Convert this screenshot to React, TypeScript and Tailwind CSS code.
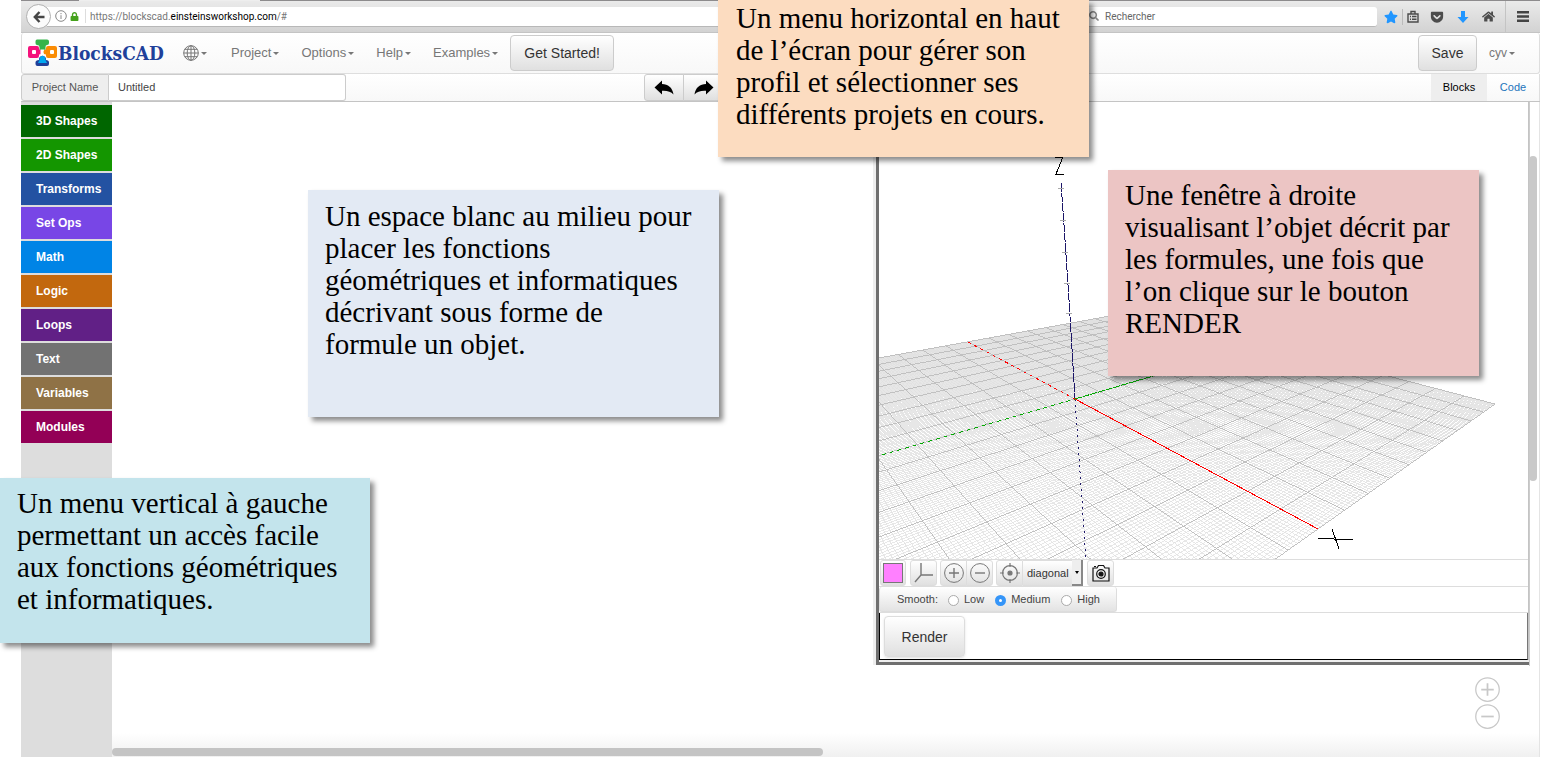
import React from "react";
import { FaStar, FaLock, FaHome, FaGetPocket, FaSearch } from "react-icons/fa";

const MENUS = ["Project", "Options", "Help", "Examples"];

const CATEGORIES = [
  { name: "3D Shapes", color: "bg-[#006600]" },
  { name: "2D Shapes", color: "bg-[#149600]" },
  { name: "Transforms", color: "bg-[#2352a2]" },
  { name: "Set Ops", color: "bg-[#7846e6]" },
  { name: "Math", color: "bg-[#0084e6]" },
  { name: "Logic", color: "bg-[#c2680e]" },
  { name: "Loops", color: "bg-[#612086]" },
  { name: "Text", color: "bg-[#727272]" },
  { name: "Variables", color: "bg-[#8f7246]" },
  { name: "Modules", color: "bg-[#930056]" },
];

// Perspective projection of the ground plane, with x and y running from -1 to 1.
function project(x: number, y: number): string {
  const w = 1 - 0.3886 * x + 0.359 * y;
  const px = (-269.2 * x + 645 * y + 1075) / w;
  const py = (-75.6 * x + 68.6 * y + 399) / w;
  return `${px.toFixed(1)} ${py.toFixed(1)}`;
}

function gridPath(count: number): string {
  const parts: string[] = [];
  for (let i = -count; i <= count; i++) {
    const t = i / count;
    parts.push(`M${project(t, -1)}L${project(t, 1)}`);
    parts.push(`M${project(-1, t)}L${project(1, t)}`);
  }
  return parts.join("");
}

const MINOR_GRID = gridPath(100);
const MAJOR_GRID = gridPath(10);

function Caret() {
  return <span className="border-x-[3px] border-t-[3px] border-x-transparent border-t-[#777]" />;
}

function Logo() {
  return (
    <svg viewBox="0 0 30 28" className="h-7 w-[30px]" aria-hidden="true">
      <path d="M9 0.500H19Q21 0.500 21 2.500V4Q21 6 19 6Q17.500 6 17.500 8V11Q17.500 13.500 14.500 13.500Q11.500 13.500 11.500 11V8Q11.500 6 9 6Q7.500 6 7.500 4V2.500Q7.500 0.500 9 0.500Z" fill="#35b44a" />
      <path d="M11 19Q14.500 14.500 18 19V21Q21 21 21 23.500V25Q21 27 19 27H9.500Q7.500 27 7.500 25V23.500Q7.500 21 11 21Z" fill="#20409a" />
      <path d="M11.500 19Q14.500 14.500 17.500 19V21L19 24H10L11.500 21Z" fill="#00a8f0" />
      <path d="M2 7H9Q11 7 11 9V10.500Q14 10.500 14 13Q14 15.500 11 15.500V17Q11 19 9 19H2Q0 19 0 17V9Q0 7 2 7Z" fill="#f4127c" />
      <path d="M12.500 10.500H16.500V16H12.500Z" fill="#fff" />
      <path d="M20 7H27Q29 7 29 9V17Q29 19 27 19H20Q18 19 18 17V15.500Q15.500 15.500 15.500 13Q15.500 10.500 18 10.500V9Q18 7 20 7Z" fill="#fa8c05" />
      <rect x="4" y="11" width="4" height="4" rx="1" fill="#fff" />
      <rect x="22" y="11" width="4" height="4" rx="1" fill="#fff" />
    </svg>
  );
}

function Globe() {
  return (
    <svg viewBox="0 0 16 16" className="size-4" fill="none" stroke="#777" aria-hidden="true">
      <circle cx="8" cy="8" r="7.300" />
      <ellipse cx="8" cy="8" rx="3.800" ry="7.300" />
      <path d="M8 .7V15.300M.7 8H15.300M1.800 4.300H14.200M1.800 11.700H14.200" />
    </svg>
  );
}

function CurvedArrow({ flip }: { flip?: boolean }) {
  return (
    <svg viewBox="0 0 20 15" className={flip ? "h-[15px] w-5 -scale-x-100" : "h-[15px] w-5"} aria-hidden="true">
      <path d="M.5 7.500L8 .5V4C14 4 18.500 7.500 19.500 14.500C17 11.500 13 10.500 8 10.800V14.500Z" />
    </svg>
  );
}

function CircleSign({ plus }: { plus?: boolean }) {
  return (
    <svg viewBox="0 0 20 20" className="size-5" fill="none" stroke="currentColor" aria-hidden="true">
      <circle cx="10" cy="10" r="9.400" />
      <path d={plus ? "M5 10H15M10 5V15" : "M5 10H15"} strokeWidth="1.400" />
    </svg>
  );
}

function BrowserBar() {
  return (
    <div className="flex h-[33px] flex-col bg-linear-to-b from-[#ebebeb] to-[#d2d2d2] text-[#4c4c4c]">
      <div className="flex h-px bg-[#8d8b8d]">
        <span className="ml-[58px] w-[181px] bg-[#eee]" />
      </div>
      <div className="flex flex-1 items-center border-b border-[#c4c4c4]">
        <button aria-label="Back" className="z-10 ml-[5px] flex size-[25px] shrink-0 items-center justify-center rounded-full border border-[#b0b0b0] bg-[#fbfbfb]">
          <svg viewBox="0 0 12 12" className="size-3" fill="none" stroke="#444" strokeWidth="2.400" aria-hidden="true">
            <path d="M6.500 1L1.800 6L6.500 11M2 6H11.500" />
          </svg>
        </button>
        <div className="-ml-1 flex h-5 flex-1 items-center border-b border-[#b8b8b8] bg-white pl-2">
          <svg viewBox="0 0 12 12" className="size-3 shrink-0" fill="none" stroke="#888" aria-hidden="true">
            <circle cx="6" cy="6" r="5.300" />
            <path d="M6 5.200V9M6 3V4.200" />
          </svg>
          <FaLock className="ml-[3px] size-[9px] text-[#45a21c]" />
          <span className="mr-1 ml-[6px] h-3.5 w-px bg-[#ddd]" />
          <span className="font-['Roboto',sans-serif] text-[10px] text-[#777]">
            https://blockscad.<span className="text-black">einsteinsworkshop.com</span>/#
          </span>
        </div>
        <label className="ml-2 flex h-5 w-[300px] items-center gap-[6px] rounded-[3px] border-b border-[#b8b8b8] bg-white pl-3">
          <FaSearch className="size-[10px] text-[#888]" />
          <input type="text" placeholder="Rechercher" aria-label="Rechercher" className="w-40 font-['Roboto',sans-serif] text-[10px] outline-none placeholder:text-[#666]" />
        </label>
        <div className="flex h-full items-center">
          <FaStar className="ml-[7px] size-[14px] text-[#2196ff]" />
          <span className="ml-1 h-4 w-px bg-[#bbb]" />
          <svg viewBox="0 0 12 13" className="ml-1 h-[13px] w-3" fill="none" stroke="#4c4c4c" strokeWidth="1.400" aria-hidden="true">
            <path d="M1 4H11V12H1ZM4 4V1.500H8V4M3 6.500H4M5 6.500H9.500M3 9.300H4M5 9.300H9.500" />
          </svg>
          <FaGetPocket className="ml-[11px] size-[14px]" />
          <svg viewBox="0 0 12 12" className="ml-[13px] size-3" fill="#2196ff" aria-hidden="true">
            <path d="M4 0H8V6H11.500L6 12L.5 6H4Z" />
          </svg>
          <FaHome className="ml-[13px] size-[13px]" />
          <span className="ml-[10px] h-full w-px bg-[#c4c4c4]" />
          <svg viewBox="0 0 12 11" className="mr-[11px] ml-[11px] h-[11px] w-3" fill="#444" aria-hidden="true">
            <path d="M0 0H12V2.500H0ZM0 4.200H12V6.700H0ZM0 8.400H12V10.900H0Z" />
          </svg>
        </div>
      </div>
    </div>
  );
}

function NavBar() {
  return (
    <header className="flex h-[41px] items-center rounded-[3px] border border-t-0 border-[#dedede] bg-linear-to-b from-white to-[#f8f8f8] text-[#777]">
      <a href="#" className="ml-[6px] flex items-center">
        <Logo />
        <span className="w-[108px] font-['DejaVu_Serif_Condensed','DejaVu_Serif',serif] text-[19px] leading-6 font-bold text-[#20409a]">BlocksCAD</span>
      </a>
      <nav className="flex items-center text-[13px]">
        <button aria-label="Language" className="ml-[17px] flex items-center gap-[2px]">
          <Globe />
          <Caret />
        </button>
        <span className="w-6" />
        {MENUS.map((name) => (
          <button key={name} className="mr-[22px] flex items-center gap-[2px]">
            {name}
            <Caret />
          </button>
        ))}
      </nav>
      <button className="-ml-[10px] h-9 w-26 rounded-[4px] border border-[#ccc] bg-linear-to-b from-white to-[#e0e0e0] text-sm text-[#333]">
        Get Started!
      </button>
      <span className="flex-1" />
      <button className="h-9 w-[59px] rounded-[4px] border border-[#ccc] bg-linear-to-b from-white to-[#e0e0e0] text-sm text-[#333]">
        Save
      </button>
      <button className="mr-6 ml-3 flex items-center gap-[2px] text-xs">
        cyv
        <Caret />
      </button>
    </header>
  );
}

function ProjectBar() {
  return (
    <div className="flex h-7 items-stretch border-b border-[#c4c4c4] bg-linear-to-b from-white to-[#f8f8f8] text-[11px]">
      <label htmlFor="project-name" className="flex w-[88px] items-center justify-center rounded-l-[3px] border border-[#ccc] bg-[#eee] text-[#555]">
        Project Name
      </label>
      <input id="project-name" type="text" defaultValue="Untitled" className="w-[237px] rounded-r-[3px] border border-l-0 border-[#ccc] bg-white px-[9px] text-[#444] outline-none" />
      <div className="ml-[298px] flex">
        <button aria-label="Undo" className="flex w-10 items-center justify-center rounded-l-[3px] border border-[#ccc] bg-linear-to-b from-white to-[#e0e0e0] text-black">
          <CurvedArrow />
        </button>
        <button aria-label="Redo" className="-ml-px flex w-[42px] items-center justify-center rounded-r-[3px] border border-[#ccc] bg-linear-to-b from-white to-[#e0e0e0] text-black">
          <CurvedArrow flip />
        </button>
      </div>
      <span className="flex-1" />
      <button className="w-14 bg-[#eee] text-black">Blocks</button>
      <button className="w-[53px] border-r border-[#dedede] text-[#2374bb]">Code</button>
    </div>
  );
}

function Scene() {
  return (
    <svg viewBox="879 102 649 457" className="block w-full" fill="none" shapeRendering="crispEdges" role="img" aria-label="3D view">
      <path d={MINOR_GRID} stroke="#e1e1e1" strokeWidth="0.800" />
      <path d={MAJOR_GRID} stroke="#b8b8b8" strokeWidth="0.800" />
      <path d="M1061 183L1064 225L1069 300L1075 398" stroke="#1c1668" strokeDasharray="9 1" />
      <path d="M1075 399L1086 559" stroke="#1c1668" strokeDasharray="2 4" />
      <path d="M1058 188H1064M1060 220H1066M1062 252H1068M1064 283H1070M1066 313H1072" stroke="#aaa" />
      <path d="M968 342L1075 399" stroke="#f00" strokeDasharray="3 4" />
      <path d="M1075 399L1318 529" stroke="#f00" />
      <path d="M882 455L1075 399" stroke="#0a0" strokeDasharray="4 4" />
      <path d="M1075 399L1153 376" stroke="#0a0" strokeDasharray="7 1" />
      <path d="M1055 157H1063L1056 174H1064" stroke="#000" />
      <path d="M1318 538.500H1334M1334 539.500H1353M1332 529L1339 549" stroke="#000" />
    </svg>
  );
}

function Viewer() {
  return (
    <section className="absolute top-0 right-[10px] w-[653px] border-b-[3px] border-l-[3px] border-[#6f6f6f] bg-[#eee] shadow-[-3px_0_0_#eee]">
      <div className="mb-[2px] border-r border-[#c4c4c4] bg-white">
        <Scene />
        <div className="flex h-[27px] items-stretch border-t border-[#ddd] pl-px text-[#777]">
          <button aria-label="Color" className="flex w-[26px] items-center justify-center rounded-[3px] border border-[#ddd] bg-linear-to-b from-white to-[#e0e0e0]">
            <span className="size-5 border border-[#777] bg-[#ff80ff]" />
          </button>
          <button aria-label="Axes" className="ml-1 flex w-[27px] items-center justify-center rounded-[3px] border border-[#ddd] bg-linear-to-b from-white to-[#e0e0e0]">
            <svg viewBox="0 0 20 20" className="size-5" fill="none" stroke="#777" strokeWidth="1.400" aria-hidden="true">
              <path d="M7 0V12H19M7 12L1 19" />
            </svg>
          </button>
          <button aria-label="Zoom in" className="ml-[3px] flex w-[27px] items-center justify-center rounded-l-[3px] border border-[#ddd] bg-linear-to-b from-white to-[#e0e0e0]">
            <CircleSign plus />
          </button>
          <button aria-label="Zoom out" className="-ml-px flex w-[27px] items-center justify-center rounded-r-[3px] border border-[#ddd] bg-linear-to-b from-white to-[#e0e0e0]">
            <CircleSign />
          </button>
          <button aria-label="Reset view" className="ml-[3px] flex w-[27px] items-center justify-center rounded-l-[3px] border border-[#ddd] bg-linear-to-b from-white to-[#e0e0e0]">
            <svg viewBox="0 0 22 22" className="size-[22px]" fill="none" stroke="#777" strokeWidth="1.200" aria-hidden="true">
              <circle cx="11" cy="11" r="7.400" />
              <circle cx="11" cy="11" r="2" fill="#777" />
              <path d="M11 1V5M11 17V21M1 11H5M17 11H21" />
            </svg>
          </button>
          <div className="relative flex w-[60px]">
            <select aria-label="View" className="w-full appearance-none border-y border-[#ddd] bg-linear-to-b from-white to-[#e0e0e0] pl-1 text-[11px] text-[#333] outline-none">
              <option>diagonal</option>
            </select>
            <span className="pointer-events-none absolute inset-y-0 right-0 flex w-[11px] items-center justify-center border-r-2 border-b-2 border-[#888] bg-[#eee]">
              <span className="border-x-2 border-t-[3px] border-x-transparent border-t-black" />
            </span>
          </div>
          <button aria-label="Snapshot" className="ml-1 flex w-[27px] items-center justify-center rounded-[3px] border border-[#ddd] bg-linear-to-b from-white to-[#e0e0e0]">
            <svg viewBox="0 0 18 18" className="size-[18px]" fill="none" stroke="#111" strokeWidth="1.200" aria-hidden="true">
              <path d="M1 4H5L6.500 1.500H11.500L13 4H17V17H1ZM2 2.500H4" />
              <circle cx="9" cy="10" r="4.300" />
              <circle cx="9" cy="10" r="2" fill="#111" />
            </svg>
          </button>
        </div>
        <div className="flex h-[27px] border-t border-b border-[#ddd]">
          <fieldset className="flex w-[238px] items-center rounded-[3px] border border-t-0 border-[#ddd] bg-linear-to-b from-white to-[#e3e3e3] pl-[17px] text-[11px] text-[#444]">
            <span className="mr-[9px] w-[42px]">Smooth:</span>
            <label className="flex items-center gap-[5px]">
              <input type="radio" name="smooth" className="mt-[3px] size-[11px] appearance-none rounded-full border border-[#aaa] bg-white" />
              Low
            </label>
            <label className="ml-[11px] flex items-center gap-[5px]">
              <input type="radio" name="smooth" defaultChecked className="mt-[3px] size-[11px] appearance-none rounded-full border-4 border-[#3595f8] bg-white" />
              Medium
            </label>
            <label className="ml-[11px] flex items-center gap-[5px]">
              <input type="radio" name="smooth" className="mt-[3px] size-[11px] appearance-none rounded-full border border-[#aaa] bg-white" />
              High
            </label>
          </fieldset>
        </div>
        <div className="flex border-r border-b border-l border-r-[#777] border-b-black border-l-black px-1 pt-[3px] pb-[2px]">
          <button className="h-[41px] w-[81px] rounded-[4px] border border-[#ddd] bg-linear-to-b from-white to-[#e0e0e0] text-sm text-[#333] shadow-sm">
            Render
          </button>
        </div>
      </div>
    </section>
  );
}

function Note({ className, lines }: { className: string; lines: string[] }) {
  return (
    <p className={`absolute font-['Liberation_Serif',serif] text-[29px] leading-8 whitespace-nowrap text-black shadow-[4px_4px_5px_rgba(0,0,0,0.45)] ${className}`}>
      {lines.map((line) => (
        <span key={line} className="block">
          {line}
        </span>
      ))}
    </p>
  );
}

export default function App() {
  return (
    <div className="relative flex min-h-screen flex-col overflow-hidden bg-white pr-[2px] pb-[3px] pl-[21px] font-['Liberation_Sans',sans-serif]">
      <BrowserBar />
      <NavBar />
      <ProjectBar />
      <main className="flex flex-1">
        <aside className="flex w-[91px] flex-col gap-[2px] bg-[#ddd] pt-[3px]">
          {CATEGORIES.map(({ name, color }) => (
            <button key={name} className={`h-8 pl-[15px] text-left text-xs font-bold text-white ${color}`}>
              {name}
            </button>
          ))}
        </aside>
        <div className="relative flex-1 border-r border-[#e4e4e4]">
          <div className="absolute inset-x-0 bottom-0 h-6 bg-linear-to-b from-white to-[#f0f0f0]" />
          <div className="absolute bottom-px left-0 h-2 w-[711px] rounded-full bg-[#c4c4c4]" />
          <div className="absolute top-0 right-0 h-[564px] w-[10px] border-l border-[#ccc]" />
          <div className="absolute top-[54px] right-[2px] h-[325px] w-2 rounded-full bg-[#c9c9c9]" />
          <Viewer />
          <div className="absolute right-[39px] bottom-7 flex flex-col gap-[2px] text-[#c8c8c8]">
            <button aria-label="Zoom in" className="*:size-[25px]">
              <CircleSign plus />
            </button>
            <button aria-label="Zoom out" className="*:size-[25px]">
              <CircleSign />
            </button>
          </div>
        </div>
      </main>
      <Note
        className="top-0 left-[718px] z-20 h-[157px] w-[371px] bg-[#fcdcc0] pt-[2px] pl-[18px]"
        lines={["Un menu horizontal en haut", "de l’écran pour gérer son", "profil et sélectionner ses", "différents projets en cours."]}
      />
      <Note
        className="top-[190px] left-[308px] z-20 h-[227px] w-[411px] bg-[#e3eaf4] pt-[10px] pl-[17px]"
        lines={["Un espace blanc au milieu pour", "placer les fonctions", "géométriques et informatiques", "décrivant sous forme de", "formule un objet."]}
      />
      <Note
        className="top-[170px] left-[1108px] z-20 h-[206px] w-[371px] bg-[#ecc5c4] pt-[9px] pl-[17px]"
        lines={["Une fenêtre à droite", "visualisant l’objet décrit par", "les formules, une fois que", "l’on clique sur le bouton", "RENDER"]}
      />
      <Note
        className="top-[478px] left-0 z-20 h-[165px] w-[370px] bg-[#c3e4ec] pt-[9px] pl-[17px]"
        lines={["Un menu vertical à gauche", "permettant un accès facile", "aux fonctions géométriques", "et informatiques."]}
      />
    </div>
  );
}
